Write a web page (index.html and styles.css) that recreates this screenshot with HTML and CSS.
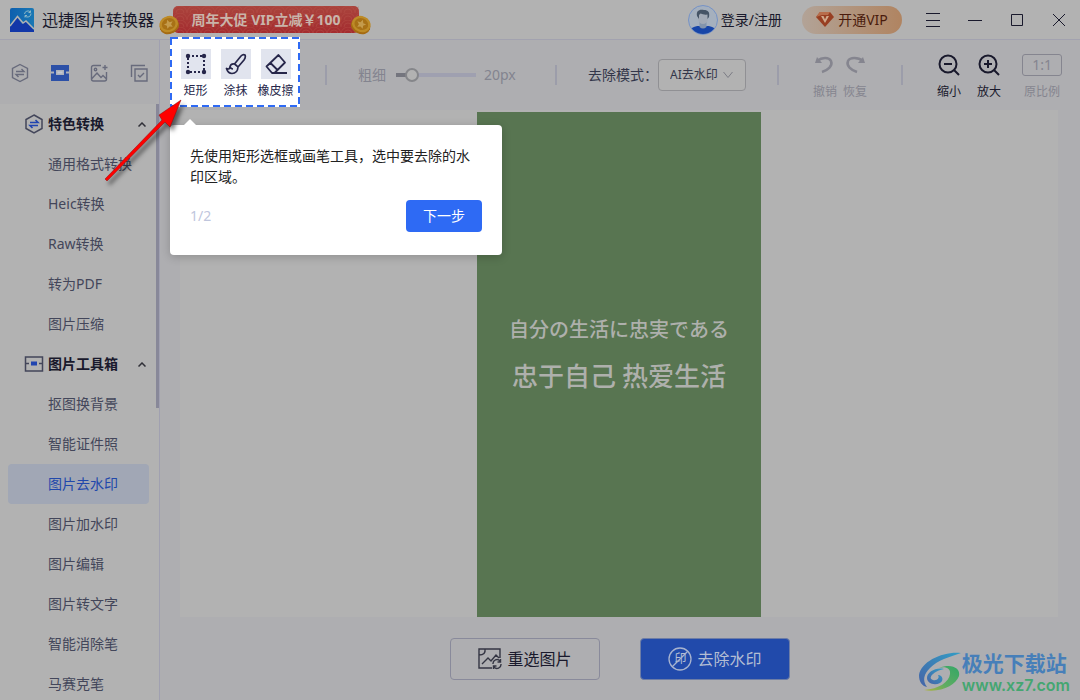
FILE: index.html
```html
<!DOCTYPE html>
<html lang="zh-CN">
<head>
<meta charset="utf-8">
<title>迅捷图片转换器</title>
<link rel="stylesheet" href="styles.css">
</head>
<body>
<header class="titlebar">
  <svg class="logo" width="24" height="24" viewBox="0 0 24 24"><defs><linearGradient id="lg" x2="1" y2="0"><stop stop-color="#0d5fae"/><stop offset="1" stop-color="#1a78b4"/></linearGradient></defs><rect width="24" height="24" rx="2" fill="url(#lg)"/><path d="M0 19L7 9.500l5 6.500 3-3 9 9v2H0z" fill="#1237a8"/><path d="M0 18L7.500 8.500 13 15l3-2 8 8" fill="none" stroke="#b2b2b2" stroke-width="1.500"/><path d="M14.500 6a3.500 3.500 0 0 1 6-2M21 5.500a3.500 3.500 0 0 1-6 2.500M20.500 2.500v2h-2M15 9.500v-2h2" fill="none" stroke="#8db8c8"/></svg>
  <h1 class="app-name">迅捷图片转换器</h1>
  <a class="promo" href="#">
    <svg class="waves" width="100%" height="27" aria-hidden="true"><defs><pattern id="wave" width="14" height="7" patternUnits="userSpaceOnUse"><path d="M0 7a7 7 0 0 1 14 0M3 7a4 4 0 0 1 8 0" fill="none" stroke="#b9554d" stroke-width=".8"/></pattern></defs><rect width="100%" height="27" fill="url(#wave)"/></svg>
    <span>周年大促 VIP立减￥100</span>
    <svg class="coin coin-left" width="20" height="18" viewBox="0 0 20 18"><ellipse cx="10" cy="10" rx="10" ry="8" fill="#a56b13"/><ellipse cx="10" cy="8" rx="9.500" ry="8" fill="#bd8b27"/><ellipse cx="10" cy="8" rx="7" ry="5.800" fill="#a87116"/><path d="M10 3.500l1.500 3 3.200.3-2.500 2.200.7 3-2.900-1.500L7.100 12l.7-3-2.500-2.200 3.200-.3z" fill="#c49b4c"/></svg>
    <svg class="coin coin-right" width="20" height="18" viewBox="0 0 20 18"><ellipse cx="10" cy="10" rx="10" ry="8" fill="#a56b13"/><ellipse cx="10" cy="8" rx="9.500" ry="8" fill="#bd8b27"/><ellipse cx="10" cy="8" rx="7" ry="5.800" fill="#a87116"/><path d="M10 3.500l1.500 3 3.200.3-2.500 2.200.7 3-2.900-1.500L7.100 12l.7-3-2.500-2.200 3.200-.3z" fill="#c49b4c"/></svg>
  </a>
  <div class="account">
    <button class="login"><svg width="30" height="30" viewBox="0 0 30 30"><defs><clipPath id="av"><circle cx="15" cy="15" r="14"/></clipPath></defs><circle cx="15" cy="15" r="14.500" fill="#a5b0be" stroke="#7592c6"/><g clip-path="url(#av)"><path d="M1 30c0-7 5-9 10-9h8c5 0 10 2 10 9z" fill="#1745a8"/><path d="M11.500 17h7v5q-3.500 3-7 0z" fill="#8294ad"/></g><path d="M10 8h10v6q-1 5-5 5t-5-5z" fill="#a2aab6"/><path d="M9 11c-1-5 2-7 7-6 4 0 6 2 5 7l-1.500 2V9.500q-4 .5-7-1L11 10v4z" fill="#455466"/></svg><span>登录/注册</span></button>
    <button class="vip"><svg width="18" height="15" viewBox="0 0 18 15"><path d="M4 0h10l4 5-9 10L0 5z" fill="#983f22"/><path d="M4 0h10l-2 3H6L0 5z" fill="#b86d4b"/><path d="M5 4l4 7 4-7h-2.500L9 7.500 7.500 4z" fill="#d0aa8c"/></svg><span>开通VIP</span></button>
    <button class="win" aria-label="菜单"><svg width="14" height="14" viewBox="0 0 14 14"><path d="M0 .5h14M0 7.500h14M0 13.500h14"/></svg></button>
    <button class="win" aria-label="最小化"><svg width="14" height="14" viewBox="0 0 14 14"><path d="M0 7.500h14"/></svg></button>
    <button class="win" aria-label="最大化"><svg width="14" height="14" viewBox="0 0 14 14"><path d="M1.500 1.500h11v11h-11z"/></svg></button>
    <button class="win" aria-label="关闭"><svg width="14" height="14" viewBox="0 0 14 14"><path d="M1 1l12 12M13 1L1 13"/></svg></button>
  </div>
</header>

<div class="shell">
  <aside class="sidebar">
    <div class="tabs">
      <button aria-label="特色转换"><svg width="20" height="20" viewBox="0 0 20 20"><path d="M10 1.500l7.500 4v9l-7.500 4-7.500-4v-9zM6 8.500h8L11.500 6M14 11.500H6L8.500 14"/></svg></button>
      <button class="current" aria-label="图片工具箱"><svg width="20" height="20" viewBox="0 0 20 20"><path d="M1 2h18v16H1z" fill="#2c50a7"/><path d="M1 8.500h3v2H1zM6 7h8v5H6zM16 8.500h3v2h-3z" fill="#aeb2bb"/><path d="M7.500 8.500h5v2h-5z" fill="#c4c8d2"/></svg></button>
      <button aria-label="图片"><svg width="20" height="20" viewBox="0 0 20 20"><path d="M11 2.500H3.500a2 2 0 0 0-2 2V16a2 2 0 0 0 2 2h11a2 2 0 0 0 2-2V9M1.500 16L7 10l4 4.500 2-2 3.500 3.500"/><circle cx="5.500" cy="6.500" r="1.200"/><path d="M15 2v5M12.500 4.500h5"/></svg></button>
      <button aria-label="批量"><svg width="20" height="20" viewBox="0 0 20 20"><path d="M1.500 14V2.500H15M5 6h12v12H5zM8 12l2 2 4-4"/></svg></button>
    </div>
    <nav class="menu">
      <div class="thumb"></div>
      <button class="group"><svg width="20" height="20" viewBox="0 0 20 20"><path d="M10 1l8 4.500v9L10 19l-8-4.500v-9z" fill="none" stroke="#43465a" stroke-width="1.500"/><path d="M6 8.500h8L11.500 6M14 11.500H6L8.500 14" fill="none" stroke="#2145b0" stroke-width="1.600"/></svg><span>特色转换</span><svg class="caret" width="8" height="5" viewBox="0 0 8 5"><path d="M.5 4.500L4 1l3.500 3.500"/></svg></button>
      <a href="#">通用格式转换</a>
      <a href="#">Heic转换</a>
      <a href="#">Raw转换</a>
      <a href="#">转为PDF</a>
      <a href="#">图片压缩</a>
      <button class="group"><svg width="20" height="20" viewBox="0 0 20 20"><path d="M1.500 3h17v14h-17zM2 9.500h3m10 0h3" fill="none" stroke="#43465a" stroke-width="1.500"/><path d="M7 7.500h6v4H7z" fill="#2145b0"/></svg><span>图片工具箱</span><svg class="caret" width="8" height="5" viewBox="0 0 8 5"><path d="M.5 4.500L4 1l3.500 3.500"/></svg></button>
      <a href="#">抠图换背景</a>
      <a href="#">智能证件照</a>
      <a class="active" href="#">图片去水印</a>
      <a href="#">图片加水印</a>
      <a href="#">图片编辑</a>
      <a href="#">图片转文字</a>
      <a href="#">智能消除笔</a>
      <a href="#">马赛克笔</a>
    </nav>
  </aside>

  <main class="work">
    <div class="toolbar">
      <div class="tools">
        <svg class="dashes" width="130" height="70" viewBox="0 0 130 70" aria-hidden="true"><rect x="1" y="1" width="128" height="68"/></svg>
        <button><span class="tile"><svg width="22" height="22" viewBox="0 0 22 22"><rect x="3" y="3" width="16" height="16" fill="none" stroke="#26264a" stroke-width="2" stroke-dasharray="2 2"/><g fill="#26264a"><circle cx="3" cy="3" r="2.200"/><circle cx="19" cy="3" r="2.200"/><circle cx="3" cy="19" r="2.200"/><circle cx="19" cy="19" r="2.200"/></g></svg></span>矩形</button>
        <button><span class="tile"><svg width="22" height="22" viewBox="0 0 22 22" fill="none" stroke="#26264a" stroke-width="1.700" stroke-linejoin="round"><path d="M9.500 11L16 3q2-2 4-1 1 2-1 5l-6 7q-2-2-3.500-3zM9.500 11q-4-.5-4.500 3-.5 3-3.500 1.500Q3 20.500 7 20.500q5.500 0 6-6.500M5 14q1 2 3 2"/></svg></span>涂抹</button>
        <button><span class="tile"><svg width="22" height="22" viewBox="0 0 22 22" fill="none" stroke="#26264a" stroke-width="1.800" stroke-linejoin="round"><path d="M1.500 13.500L13.500 2l6.500 7.500L9.500 20H7zM5.500 10l7 7M7 20h15"/></svg></span>橡皮擦</button>
      </div>
      <i class="sep"></i>
      <div class="thickness"><label for="size">粗细</label><input id="size" type="range" min="0" max="100" value="14"><output for="size">20px</output></div>
      <i class="sep"></i>
      <div class="mode"><label for="mode">去除模式：</label><span class="pick"><select id="mode"><option>AI去水印</option></select><svg width="10" height="8" viewBox="0 0 10 8"><path d="M.5 1L5 6.500 9.500 1"/></svg></span></div>
      <i class="sep"></i>
      <div class="history">
        <button class="off"><svg width="22" height="22" viewBox="0 0 22 22"><path d="M3 7c5-4 12-4 14 0 2 5-3 9-9 11" fill="none" stroke="#85858f" stroke-width="2.500"/><path d="M1 9l2-6 5 6z" fill="#85858f"/></svg>撤销</button>
        <button class="off"><svg width="22" height="22" viewBox="0 0 22 22"><path d="M19 7C14 3 6 3 4 7c-2 5 3 9 9 11" fill="none" stroke="#85858f" stroke-width="2.500"/><path d="M21 9l-2-6-5 6z" fill="#85858f"/></svg>恢复</button>
      </div>
      <i class="sep"></i>
      <div class="zoom">
        <button><svg width="22" height="22" viewBox="0 0 22 22" fill="none" stroke="#19192c" stroke-width="2"><circle cx="10" cy="10" r="8.500"/><path d="M6 10h8M16 16l5 5"/></svg>缩小</button>
        <button><svg width="22" height="22" viewBox="0 0 22 22" fill="none" stroke="#19192c" stroke-width="2"><circle cx="10" cy="10" r="8.500"/><path d="M6 10h8M10 6v8M16 16l5 5"/></svg>放大</button>
        <button class="off"><span class="ratio">1:1</span>原比例</button>
      </div>
    </div>
    <section class="canvas">
      <div class="picture"><p class="ja" lang="ja">自分の生活に忠実である</p><p class="zh">忠于自己 热爱生活</p></div>
    </section>
    <footer class="actions">
      <button class="reselect"><svg width="24" height="22" viewBox="0 0 24 22" fill="none" stroke="#343543" stroke-width="1.400"><path d="M22 10V1H1v19h13M7 1q1 6-6 6M4 16l6-6 3 3 5-6 3 3"/><path d="M15 16a4 4 0 0 1 7-3M23 16a4 4 0 0 1-7 3M22.500 11v3h-3M15.500 21v-3h3"/></svg><span>重选图片</span></button>
      <button class="remove"><span class="stamp">印<svg width="24" height="24" viewBox="0 0 24 24"><circle cx="12" cy="12" r="11"/><path d="M4 20L20 4"/></svg></span><span>去除水印</span></button>
    </footer>
  </main>
</div>

<div class="guide" role="dialog" aria-label="新手引导">
  <p>先使用矩形选框或画笔工具，选中要去除的水印区域。</p>
  <div class="guide-foot"><span>1/2</span><button>下一步</button></div>
</div>

<svg class="arrow" width="90" height="96" viewBox="0 0 90 96"><path d="M6 83L63 24 60 19 82 4 71 31 66 26 8 85z" fill="#f00" stroke="#8c0808" stroke-width=".5"/></svg>

<div class="watermark">
  <svg width="44" height="42" viewBox="0 0 44 42"><defs><linearGradient id="wb" x1="1" y1="0" x2="0" y2="1"><stop stop-color="#329dc5"/><stop offset="1" stop-color="#4563a7"/></linearGradient><linearGradient id="wg" x1="1" y1="0" x2="0" y2="1"><stop stop-color="#32a766"/><stop offset=".6" stop-color="#60ac62"/><stop offset="1" stop-color="#b2b33c"/></linearGradient></defs><path d="M43 2C26 0 3 10 1 24c0 7 3 11 8 12-5-7-3-13 3-19C20 9 31 6 43 2z" fill="url(#wb)"/><path d="M26 18c-8-2-17 3-17 9 0 5 7 8 13 5 4-2 3-8-2-8 2 3-1 6-5 5-6-2 1-9 11-11z" fill="url(#wb)"/><path d="M21 17c6-2 12 0 11 6-1 8-11 15-26 16 17 3 32-5 35-14 2-8-8-13-20-8z" fill="url(#wg)"/></svg>
  <div><strong>极光下载站</strong><span>www.xz7.com</span></div>
</div>
</body>
</html>
```
FILE: styles.css
```css
* { box-sizing: border-box; }
html, body { height: 100%; }
body {
  margin: 0;
  display: flex;
  flex-direction: column;
  overflow: hidden;
  position: relative;
  background: #aeaeb1;
  color: #19192c;
  font: 14px/20px "Noto Sans", "Noto Sans CJK SC", sans-serif;
}
button, select {
  padding: 0;
  border: 0;
  background: none;
  color: inherit;
  font: inherit;
  white-space: nowrap;
}
a { color: inherit; text-decoration: none; }
p { margin: 0; }
svg { flex: none; display: block; }

.titlebar {
  flex: none;
  height: 40px;
  display: flex;
  align-items: center;
  padding: 0 14px 0 10px;
  background: #b2b2b2;
  border-bottom: 1px solid #a2a2af;
}
.app-name { margin: 0 0 0 8px; font-size: 16px; font-weight: 400; white-space: nowrap; }
.promo {
  position: relative;
  flex: none;
  width: 186px;
  height: 27px;
  margin-left: 19px;
  display: flex;
  align-items: center;
  justify-content: center;
  border-radius: 5px;
  background: linear-gradient(#aa443d, #a42c2f);
  color: #c9b4aa;
  font-weight: 700;
  white-space: nowrap;
}
.promo span { position: relative; }
.waves { position: absolute; top: 0; left: 0; opacity: 0.5; }
.coin { position: absolute; bottom: -1px; }
.coin-left { left: -14px; transform: rotate(-20deg); }
.coin-right { right: -12px; transform: rotate(20deg); }
.account { margin-left: auto; display: flex; align-items: center; }
.login { display: flex; align-items: center; gap: 3px; }
.vip {
  width: 100px;
  height: 28px;
  margin: 0 24px 0 20px;
  display: flex;
  align-items: center;
  justify-content: center;
  gap: 4px;
  border-radius: 14px;
  background: linear-gradient(90deg, #b2a397, #b08461);
  color: #4a1b0c;
}
.win { width: 14px; height: 14px; }
.win + .win { margin-left: 28px; }
.win path { fill: none; stroke: #19192c; }

.shell { flex: 1; min-height: 0; display: flex; }
.sidebar {
  flex: none;
  width: 160px;
  display: flex;
  flex-direction: column;
  border-right: 1px solid #a0a0b0;
  background: #b2b2b2;
}
.tabs {
  flex: none;
  height: 64px;
  display: flex;
  align-items: center;
  gap: 20px;
  padding: 2px 10px 0;
  background: #aeaeb0;
}
.tabs button { width: 20px; height: 20px; }
.tabs button:not(.current) svg { fill: none; stroke: #686b7c; stroke-width: 1.4; }
.menu {
  position: relative;
  flex: 1;
  min-height: 0;
  overflow: hidden;
  display: flex;
  flex-direction: column;
  padding: 0 10px 0 8px;
}
.thumb { position: absolute; top: 0; right: 0; width: 3px; height: 304px; background: #888899; }
.menu a, .group { flex: none; height: 40px; line-height: 40px; }
.menu a { padding-left: 40px; border-radius: 4px; color: #43465a; }
.menu .active { background: #a1a7b5; color: #2148ab; }
.group { display: flex; align-items: center; gap: 4px; padding: 0 3px 0 16px; font-weight: 700; }
.caret { margin-left: auto; }
.caret path { fill: none; stroke: #303038; stroke-width: 1.5; }

.work { flex: 1; min-width: 0; display: flex; flex-direction: column; }
.toolbar { flex: none; height: 70px; display: flex; align-items: center; gap: 31px; padding: 0 18px 0 10px; }
.toolbar label, .toolbar output { white-space: nowrap; }
.tools {
  position: relative;
  flex: none;
  align-self: flex-start;
  width: 130px;
  height: 70px;
  margin: -3px -6px 0 0;
  display: flex;
  justify-content: center;
  padding: 12px 2px 0 3px;
  background: #fff;
  color: #26264a;
}
.dashes { position: absolute; inset: 0; pointer-events: none; }
.dashes rect { fill: none; stroke: #2e6af4; stroke-width: 2; stroke-dasharray: 7 4; }
.tools button, .history button, .zoom button {
  flex: none;
  display: flex;
  flex-direction: column;
  align-items: center;
  font-size: 12px;
  line-height: 16px;
}
.tools button { width: 40px; gap: 4px; }
.tile { width: 30px; height: 30px; display: grid; place-items: center; background: #e1e4ee; }
.sep { flex: none; width: 2px; height: 20px; background: #9c9daa; }
.thickness { flex: none; width: 166px; display: flex; align-items: center; color: #83848f; }
.thickness input {
  width: 80px;
  height: 14px;
  margin: 0 8px 0 10px;
  appearance: none;
  border-radius: 2px;
  background: linear-gradient(90deg, #74757e 12px, #9fa0b0 12px) center / 100% 4px no-repeat;
}
.thickness input::-webkit-slider-thumb {
  appearance: none;
  width: 14px;
  height: 14px;
  border: 2px solid #85868a;
  border-radius: 50%;
  background: #b2b2b2;
}
.mode { flex: none; width: 158px; display: flex; align-items: center; justify-content: space-between; color: #33364a; }
.mode label { width: 70px; }
.pick { position: relative; flex: none; width: 88px; }
.pick select {
  display: block;
  width: 100%;
  height: 32px;
  padding-left: 11px;
  appearance: none;
  border: 1px solid #909094;
  border-radius: 4px;
  background: #b2b2b2;
  font-size: 12px;
}
.pick svg { position: absolute; top: 12px; right: 13px; pointer-events: none; }
.pick path { fill: none; stroke: #7b7c84; }
.history, .zoom { flex: none; display: flex; padding-top: 4px; }
.history { gap: 6px; margin: 0 3px; }
.history button, .zoom button { gap: 8px; }
.toolbar .off { color: #85858f; }
.zoom { gap: 16px; margin-left: 3px; }
.zoom .off { width: 40px; margin-left: 5px; }
.ratio { width: 40px; height: 22px; border: 1px solid #85858f; border-radius: 3px; font-size: 14px; line-height: 20px; text-align: center; }

.canvas { flex: 1; min-height: 0; display: flex; justify-content: center; margin: 0 22px 0 20px; padding-top: 2px; background: #b2b2b2; }
.picture {
  height: 100%;
  aspect-ratio: 9 / 16;
  display: flex;
  flex-direction: column;
  align-items: center;
  justify-content: center;
  gap: 8px;
  padding-bottom: 24px;
  background: #587551;
  color: #aeb0ac;
  font-weight: 500;
  white-space: nowrap;
}
.ja { font-family: "Noto Sans CJK JP", sans-serif; font-size: 20px; line-height: 36px; }
.zh { font-family: "Noto Sans CJK SC", sans-serif; font-size: 26px; line-height: 40px; }
.actions { flex: none; height: 83px; display: flex; align-items: center; justify-content: center; gap: 40px; }
.actions button {
  width: 150px;
  height: 42px;
  display: flex;
  align-items: center;
  justify-content: center;
  gap: 5px;
  border: 1px solid #898a9b;
  border-radius: 4px;
  font-size: 16px;
}
.actions .remove { border-color: #6d7da6; background: #214aab; color: #b3bdd3; }
.stamp { position: relative; width: 24px; height: 24px; font-size: 12px; line-height: 24px; }
.stamp svg { position: absolute; inset: 0; }
.stamp circle, .stamp path { fill: none; stroke: #a7b3cf; stroke-width: 1.3; }

.guide {
  position: absolute;
  top: 125px;
  left: 170px;
  width: 332px;
  padding: 20px 20px 23px;
  border-radius: 4px;
  background: #fff;
  box-shadow: 0 2px 10px rgba(0, 0, 0, 0.2);
  color: #222;
}
.guide::before {
  content: "";
  position: absolute;
  top: -6px;
  left: 14px;
  border: 6px solid transparent;
  border-top: 0;
  border-bottom-color: #fff;
}
.guide p { line-height: 21px; }
.guide-foot { display: flex; align-items: center; justify-content: space-between; margin-top: 13px; color: #c0c6dd; }
.guide-foot button { width: 76px; height: 32px; border-radius: 4px; background: #2e6af4; color: #fff; }

.arrow { position: absolute; top: 96px; left: 99px; filter: drop-shadow(3px 4px 2px rgba(0, 0, 0, 0.5)); pointer-events: none; }
.watermark { position: absolute; right: 10px; bottom: 6px; display: flex; align-items: center; }
.watermark div { display: flex; flex-direction: column; white-space: nowrap; }
.watermark strong { color: #477fb9; font-size: 21px; line-height: 26px; }
.watermark span { color: #45a671; font: 600 16px/18px Inter, sans-serif; }
```
